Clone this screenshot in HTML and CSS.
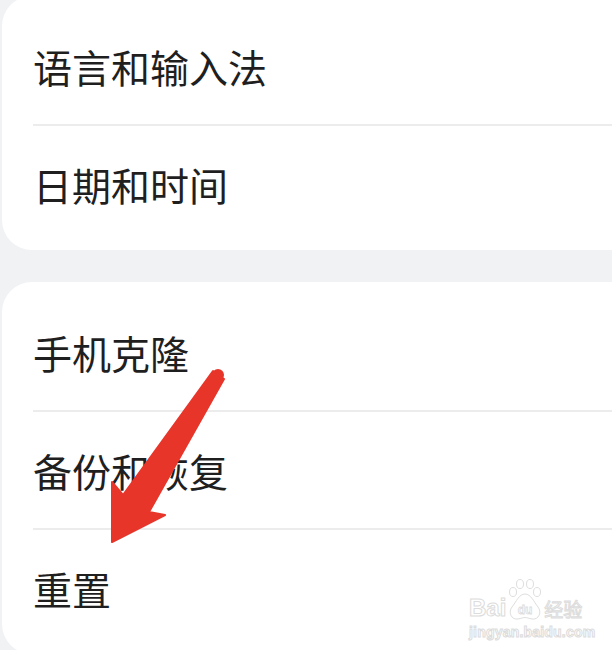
FILE: index.html
```html
<!DOCTYPE html>
<html lang="zh-CN">
<head>
  <meta charset="UTF-8" />
  <meta name="viewport" content="width=device-width, initial-scale=1.0"/>
  <title>系统设置</title>
  <link rel="stylesheet" href="styles.css">
</head>
<body>

  <div class="page">
    <div class="card">
      <div class="row">语言和输入法</div>
      <div class="row">日期和时间</div>
    </div>

    <div class="card">
      <div class="row">手机克隆</div>
      <div class="row">备份和恢复</div>
      <div class="row">重置</div>
    </div>
  </div>

  <svg class="arrow" width="612" height="650" viewBox="0 0 612 650">
    <circle cx="218" cy="375" r="6" fill="#e8352a"/>
    <polygon points="213,371 224,379 149,512 165,515 112,542 112,482 123,495"
             fill="#e8352a" stroke="#e8352a" stroke-width="2" stroke-linejoin="round"/>
  </svg>

  <div class="watermark">
    <div class="wm-top">
      <span class="wm-bai">Bai</span>
      <svg class="wm-paw" width="36" height="44" viewBox="0 0 36 44">
        <ellipse cx="6" cy="14" rx="3.5" ry="4.5" fill="#fff" stroke="#dedede"/>
        <ellipse cx="13" cy="6" rx="3.5" ry="4.5" fill="#fff" stroke="#dedede"/>
        <ellipse cx="23" cy="6" rx="3.5" ry="4.5" fill="#fff" stroke="#dedede"/>
        <ellipse cx="30" cy="14" rx="3.5" ry="4.5" fill="#fff" stroke="#dedede"/>
        <path d="M18 16 C12 16 9 24 5 29 C1 34 4 42 11 41 C14 40.5 16 39.5 18 39.5 C20 39.5 22 40.5 25 41 C32 42 35 34 31 29 C27 24 24 16 18 16 Z"
              fill="#fff" stroke="#dedede"/>
        <text x="18" y="36" text-anchor="middle" class="wm-du">du</text>
      </svg>
      <span class="wm-jy">经验</span>
    </div>
    <div class="wm-url">jingyan.baidu.com</div>
  </div>

</body>
</html>
```

FILE: styles.css
```css
body {
  margin: 0;
  padding: 0;
  background-color: #f1f2f4;
  font-family: "Noto Sans CJK SC", "Noto Sans", sans-serif;
  color: #1f1f1f;
  width: 612px;
  height: 650px;
  overflow: hidden;
  position: relative;
}

.page {
  display: flex;
  flex-direction: column;
  gap: 32px;
  margin-top: -4px;
  padding-left: 2px;
}

.card {
  background-color: #fff;
  border-radius: 30px 0 0 30px;
  padding: 12px 0 8px 31px;
}

.row {
  height: 116px;
  display: flex;
  align-items: center;
  font-size: 39px;
  line-height: 1;
  border-bottom: 2px solid #ececec;
}

.row:last-child {
  border-bottom: none;
}

.arrow {
  position: absolute;
  left: 0;
  top: 0;
  pointer-events: none;
}

.watermark {
  position: absolute;
  left: 469px;
  top: 578px;
  color: #fff;
  font-family: "Liberation Sans", Arial, sans-serif;
  font-weight: bold;
  -webkit-text-stroke: 1px #dcdcdc;
}

.wm-top {
  display: flex;
  align-items: flex-end;
  height: 44px;
}

.wm-bai {
  font-size: 24px;
  line-height: 1;
  margin-bottom: 2px;
}

.wm-paw {
  margin: 0 1px;
}

.wm-du {
  font-family: "Liberation Sans", Arial, sans-serif;
  font-size: 12px;
  font-weight: bold;
  fill: #fff;
  stroke: #dcdcdc;
  stroke-width: 0.8px;
}

.wm-jy {
  font-family: "Noto Sans CJK SC", sans-serif;
  font-size: 19px;
  font-weight: normal;
  line-height: 1;
  margin-bottom: 4px;
}

.wm-url {
  font-size: 14px;
  margin-top: 2px;
  letter-spacing: 0.2px;
}
```
